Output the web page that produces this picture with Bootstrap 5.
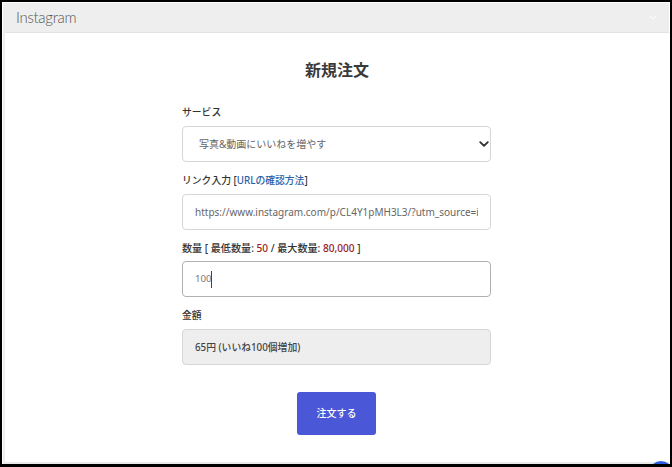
<!DOCTYPE html>
<html lang="ja">
<head>
    <meta charset="UTF-8">
    <meta name="viewport" content="width=device-width, initial-scale=1.0">
    <title>新規注文</title>
    <link href="https://cdn.jsdelivr.net/npm/bootstrap@5.3.0/dist/css/bootstrap.min.css" rel="stylesheet">
    <style>
        html, body { height: 100%; }
        body {
            font-family: "Noto Sans", "Noto Sans CJK JP", sans-serif;
            color: #333;
            background: #fff;
            overflow: hidden;
        }
        .frame {
            height: 467px;
            border: 2px solid #000;
            border-bottom-width: 3px;
            position: relative;
            overflow: hidden;
        }
        .inner {
            height: 100%;
            margin-left: 1px;
            margin-right: 1px;
            border-left: 2px solid #eee;
            border-bottom: 3px solid #e9e9e9;
        }
        .top-bar {
            height: 30px;
            background: #eee;
            border-bottom: 1px solid #e2e2e2;
            margin-top: 1px;
            padding-left: 11px;
            padding-right: 12px;
        }
        .brand {
            font-family: Lato, sans-serif;
            font-weight: 300;
            font-size: 15px;
            color: #555;
            letter-spacing: -0.3px;
        }
        .page-title {
            font-size: 16px;
            font-weight: 600;
            line-height: 24px;
            margin-top: 25px;
            margin-bottom: 24px;
            color: #3a3a3a;
        }
        .order-form { width: 309px; margin-left: 177px; }
        .field-label {
            display: block;
            font-size: 9.8px;
            font-weight: 500;
            line-height: 14px;
            margin-bottom: 6px;
            color: #333;
        }
        .field-label.wide { font-size: 10.1px; }
        .field { margin-bottom: 11.5px; }
        .form-control, .form-select {
            height: 36px;
            font-size: 10px;
            color: #666;
            border: 1px solid #d6d6d6;
            border-radius: 4px;
            padding: 0 12px;
            box-shadow: none;
        }
        .form-select {
            padding-left: 16px;
            background-image: url("data:image/svg+xml,%3csvg xmlns='http://www.w3.org/2000/svg' viewBox='0 0 16 16'%3e%3cpath fill='none' stroke='%23333' stroke-linecap='round' stroke-linejoin='round' stroke-width='3' d='m2 5 6 6 6-6'/%3e%3c/svg%3e");
            background-position: right 1px center;
            background-size: 10px 10px;
        }
        .form-control[readonly] { background: #eee; color: #444; font-size: 9.8px; font-weight: 500; }
        .caret { display: inline-block; width: 1px; height: 17px; background: #444; vertical-align: middle; }
        .typed {
            height: 36px;
            border: 1.5px solid #b0b0b0;
            border-radius: 4px;
            padding-left: 12px;
            font-size: 9.6px;
            color: #777;
        }
        .guide { color: #2a5ea8; font-weight: 500; text-decoration: none; }
        .limit { color: #9a2020; }
        .btn-order {
            width: 79px;
            height: 43px;
            margin-top: 27px;
            margin-left: 115px;
            background: #4a57d6;
            border: 0;
            border-radius: 3px;
            color: #fff;
            font-size: 10px;
            font-weight: 500;
        }
        .chat-dot {
            position: absolute;
            right: -3px;
            bottom: -21px;
            width: 24px;
            height: 24px;
            border-radius: 50%;
            background: #2f5fe0;
        }
    </style>
</head>
<body>
    <div class="frame">
        <div class="inner">
            <div class="top-bar d-flex align-items-center justify-content-between">
                <span class="brand">Instagram</span>
                <svg width="8" height="5" viewBox="0 0 8 5"><path d="M.5.5 4 4 7.5.5" fill="none" stroke="#fff" stroke-width="1"/></svg>
            </div>
            <h1 class="page-title text-center">新規注文</h1>
            <form class="order-form">
                <div class="field">
                    <label class="field-label">サービス</label>
                    <select class="form-select">
                        <option>写真&amp;動画にいいねを増やす</option>
                    </select>
                </div>
                <div class="field">
                    <label class="field-label">リンク入力 [<a class="guide" href="#">URLの確認方法</a>]</label>
                    <input class="form-control" type="text" value="https://www.instagram.com/p/CL4Y1pMH3L3/?utm_source=ig_web_copy_link">
                </div>
                <div class="field">
                    <label class="field-label wide">数量 [ 最低数量: <span class="limit">50</span> / 最大数量: <span class="limit">80,000</span> ]</label>
                    <div class="typed d-flex align-items-center">100<span class="caret"></span></div>
                </div>
                <div class="field">
                    <label class="field-label">金額</label>
                    <input class="form-control" type="text" readonly value="65円 (いいね100個増加)">
                </div>
                <button type="button" class="btn btn-order d-flex align-items-center justify-content-center">注文する</button>
            </form>
        </div>
        <span class="chat-dot"></span>
    </div>
    <script src="https://cdn.jsdelivr.net/npm/bootstrap@5.3.0/dist/js/bootstrap.bundle.min.js"></script>
</body>
</html>
